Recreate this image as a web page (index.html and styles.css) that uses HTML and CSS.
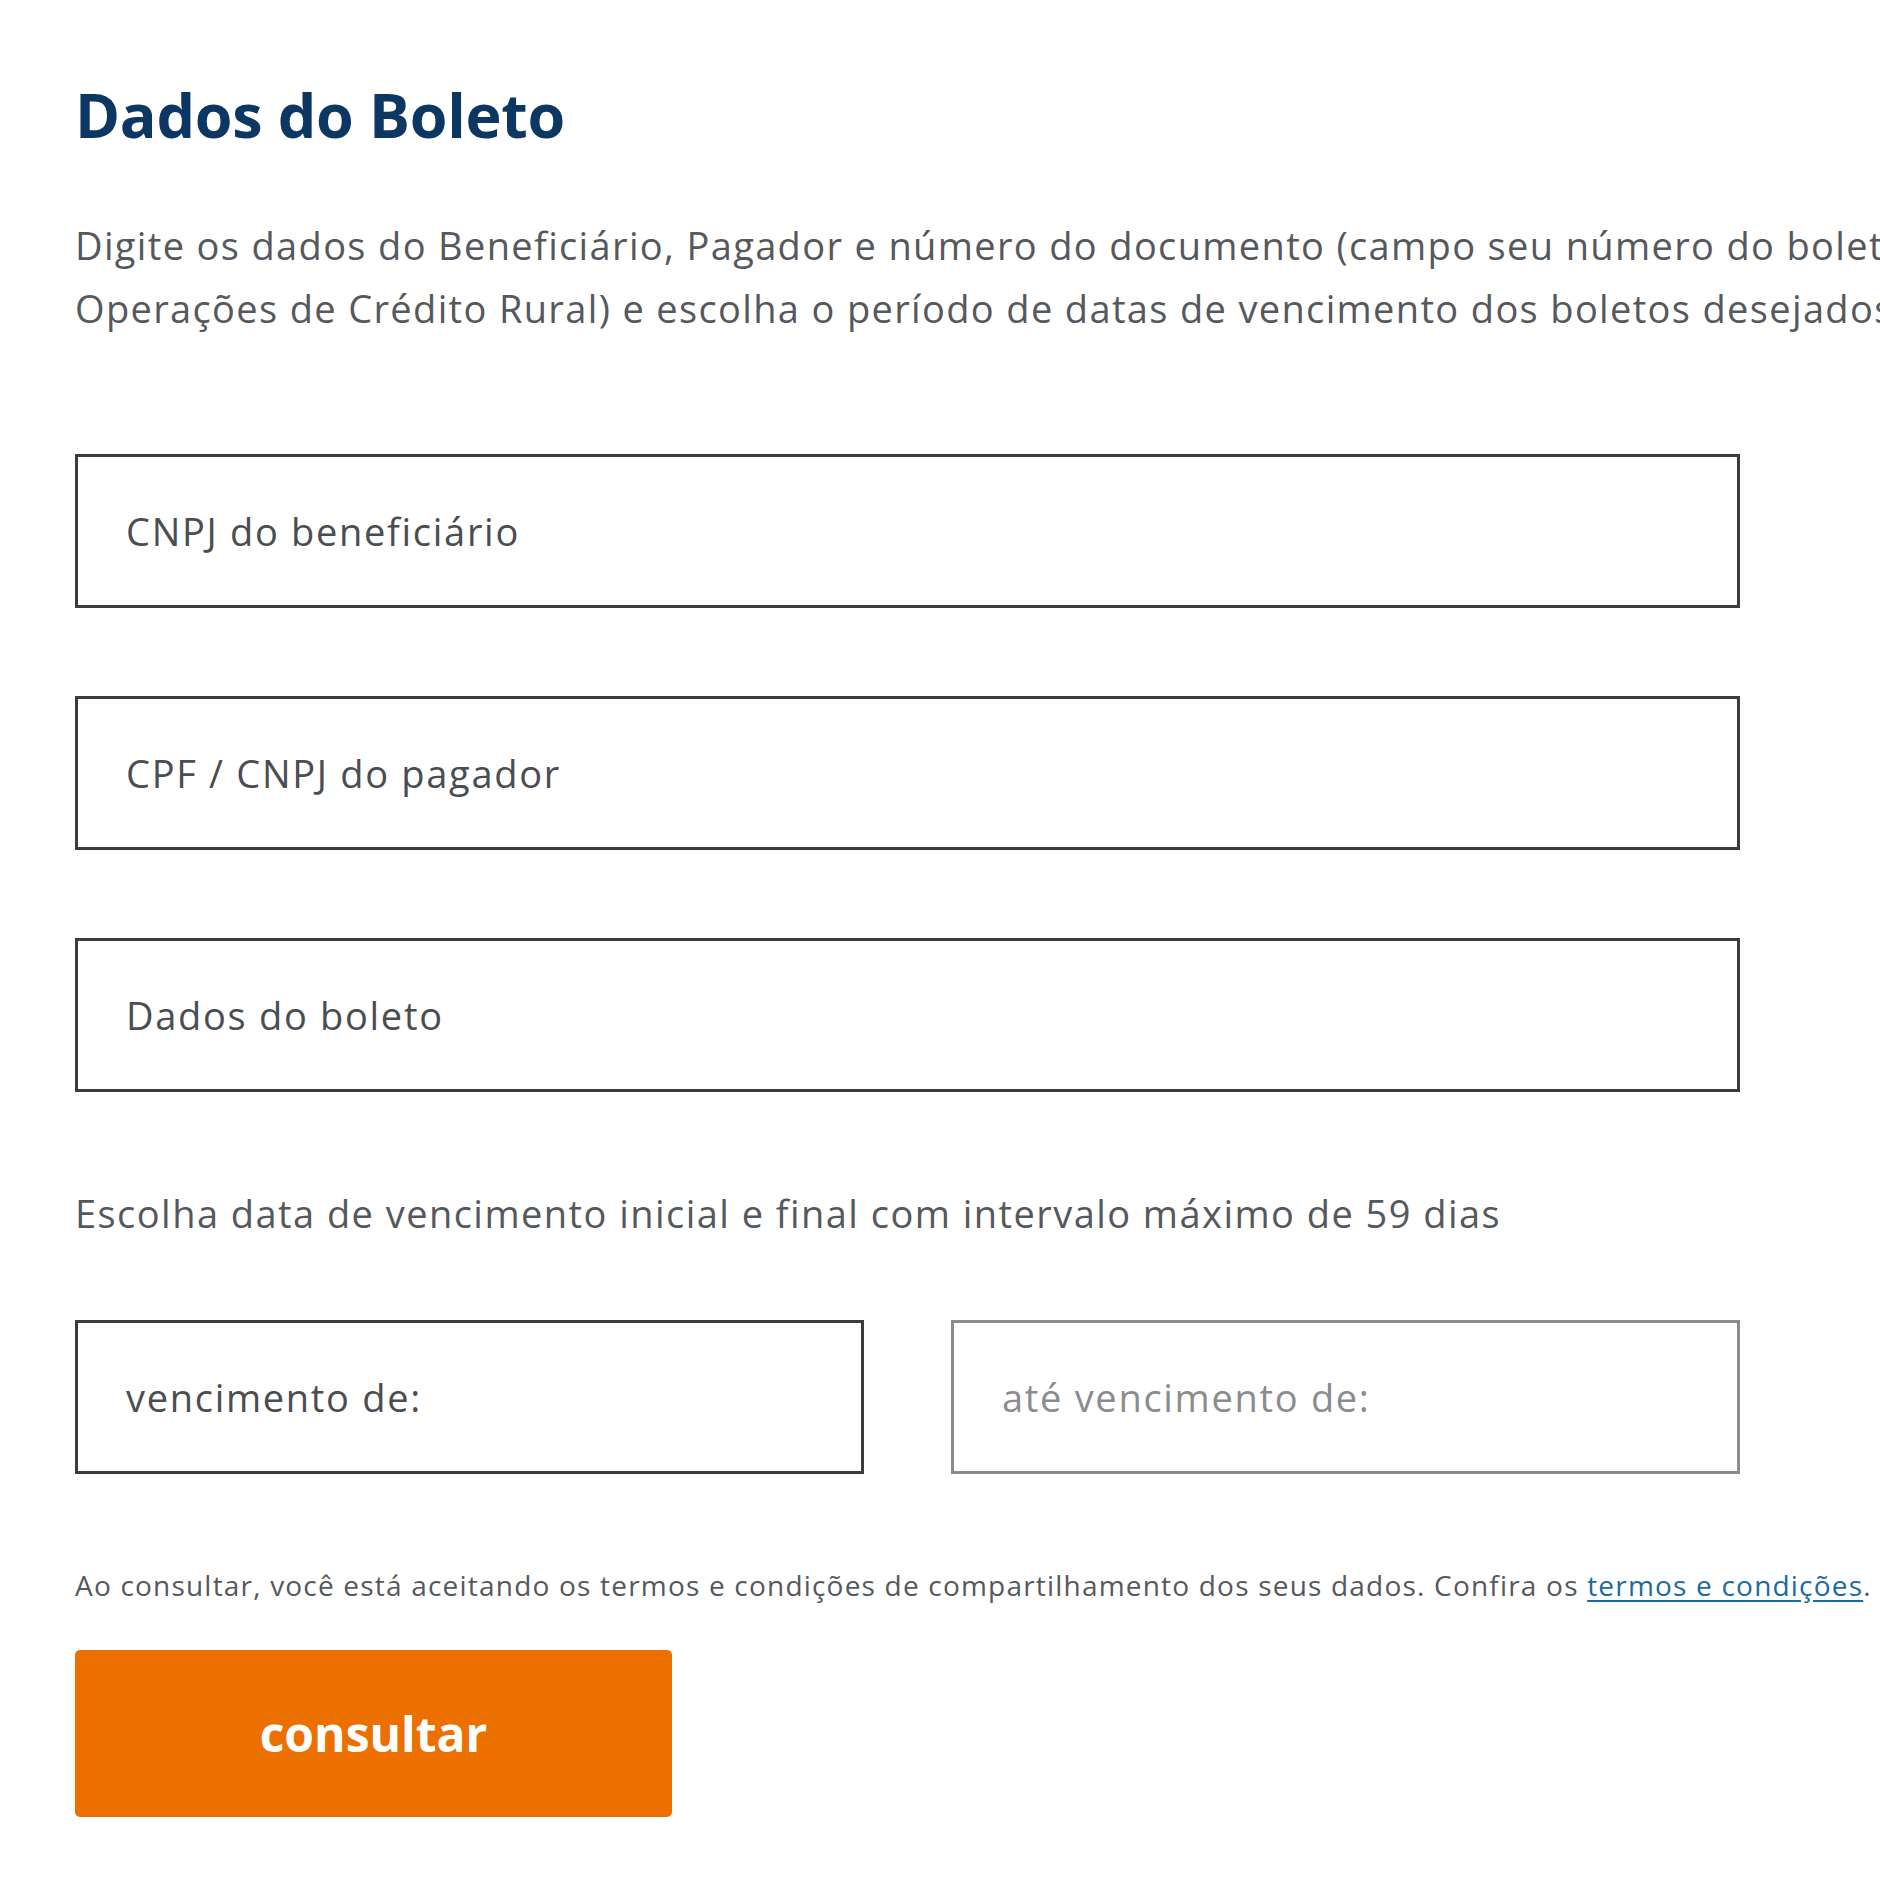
FILE: index.html
```html
<!DOCTYPE html>
<html lang="pt-BR">
<head>
<meta charset="utf-8">
<title>Dados do Boleto</title>
<link rel="stylesheet" href="styles.css">
</head>
<body>
<main class="page">
  <h1 class="title">Dados do Boleto</h1>
  <p class="intro">Digite os dados do Beneficiário, Pagador e número do documento (campo seu número do boleto, obrigatório para<br>Operações de Crédito Rural) e escolha o período de datas de vencimento dos boletos desejados:</p>

  <form class="form">
    <input class="field" type="text" placeholder="CNPJ do beneficiário">
    <input class="field" type="text" placeholder="CPF / CNPJ do pagador">
    <input class="field" type="text" placeholder="Dados do boleto">

    <p class="hint">Escolha data de vencimento inicial e final com intervalo máximo de 59 dias</p>

    <div class="dates">
      <input class="field" type="text" placeholder="vencimento de:">
      <input class="field field-disabled" type="text" placeholder="até vencimento de:" disabled>
    </div>

    <p class="terms">Ao consultar, você está aceitando os termos e condições de compartilhamento dos seus dados. Confira os <a href="#" class="terms-link">termos e condições</a>.</p>

    <button type="button" class="btn">consultar</button>
  </form>
</main>
</body>
</html>
```

FILE: styles.css
```css
html, body {
  margin: 0;
  padding: 0;
  background: #ffffff;
  overflow: hidden;
}

body {
  font-family: "Open Sans", "Noto Sans", sans-serif;
  color: #55585d;
}

.page {
  padding: 78px 0 0 75px;
  width: 2300px;
}

.title {
  margin: 0;
  font-size: 61px;
  line-height: 73px;
  font-weight: 700;
  letter-spacing: -0.3px;
  color: #0d3763;
}

.intro {
  margin: 63px 0 0;
  font-size: 38px;
  line-height: 63px;
  letter-spacing: 1.35px;
  white-space: nowrap;
  color: #55585d;
}

.form {
  display: flex;
  flex-direction: column;
  width: 1665px;
  margin-top: 114px;
}

.field {
  box-sizing: border-box;
  height: 154px;
  width: 100%;
  margin: 0;
  padding: 0 0 0 48px;
  border: 3px solid #3c3c3c;
  border-radius: 0;
  background: #ffffff;
  font-family: "Open Sans", "Noto Sans", sans-serif;
  font-size: 38px;
  letter-spacing: 1.7px;
  color: #3f4246;
  outline: none;
}

.field + .field {
  margin-top: 88px;
}

.field::placeholder {
  color: #4a4d51;
  opacity: 1;
}

.field-disabled {
  border-color: #8c8c8c;
}

.field-disabled::placeholder {
  color: #8a8c8f;
}

.hint {
  margin: 90px 0 0;
  font-size: 38px;
  line-height: 63px;
  letter-spacing: 1.45px;
  white-space: nowrap;
  color: #55585d;
}

.dates {
  display: grid;
  grid-template-columns: 1fr 1fr;
  column-gap: 87px;
  margin-top: 75px;
}

.dates .field + .field {
  margin-top: 0;
}

.terms {
  margin: 91px 0 0;
  font-size: 28px;
  line-height: 40px;
  letter-spacing: 1.2px;
  white-space: nowrap;
  color: #55585d;
}

.terms-link {
  color: #1a6b9e;
  text-decoration: underline;
  text-underline-offset: 4px;
}

.btn {
  align-self: flex-start;
  width: 597px;
  height: 167px;
  margin-top: 45px;
  border: 0;
  border-radius: 5px;
  background: #ec7000;
  color: #ffffff;
  font-family: "Open Sans", "Noto Sans", sans-serif;
  font-size: 48px;
  font-weight: 700;
  cursor: pointer;
}
```
